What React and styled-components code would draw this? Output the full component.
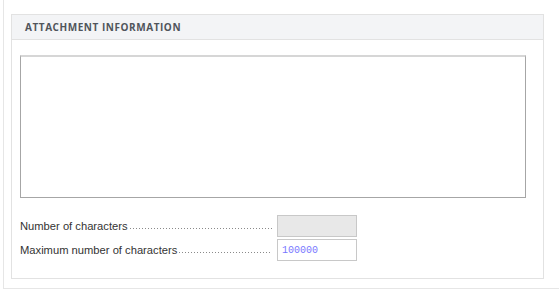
import styled, { createGlobalStyle } from "styled-components";

const GlobalStyle = createGlobalStyle`
  body {
    margin: 0;
    background: #fff;
    font-family: "Liberation Sans", Arial, sans-serif;
  }
`;

const Frame = styled.div`
  margin-left: 3px;
  border-left: 1px solid #e6e6e6;
  border-bottom: 1px solid #e6e6e6;
  padding: 14px 15px 9px 7px;
`;

const Panel = styled.div`
  border: 1px solid #e2e2e2;
  background: #fff;
`;

const PanelHeader = styled.div`
  height: 24px;
  display: flex;
  align-items: center;
  padding-left: 13px;
  background: #f3f4f6;
  border-bottom: 1px solid #e2e2e2;
`;

const PanelTitle = styled.h4`
  margin: 0;
  font-family: "Open Sans", sans-serif;
  font-size: 10px;
  font-weight: 700;
  letter-spacing: 0.55px;
  color: #50555b;
  text-transform: uppercase;
`;

const PanelBody = styled.div`
  padding: 15px 17px 15px 8px;
  display: flex;
  flex-direction: column;
`;

const TextArea = styled.textarea`
  box-sizing: border-box;
  width: 506px;
  height: 143px;
  margin: 0 0 17px;
  padding: 4px;
  resize: none;
  border: 1px solid #a6a6a6;
  border-top: 2px solid #d6d6d6;
  outline: none;
  font-family: "Liberation Sans", Arial, sans-serif;
`;

const FieldRow = styled.div`
  display: flex;
  align-items: center;
  margin-bottom: 2px;
`;

const Label = styled.div`
  width: 252px;
  margin-right: 5px;
  display: flex;
  align-items: baseline;
  white-space: nowrap;
  font-size: 11.2px;
  color: #333;
`;

const Dots = styled.span`
  flex: 1;
  height: 8px;
  margin-left: 1px;
  background-image: radial-gradient(circle, #8a8a8a 0.55px, transparent 0.9px);
  background-size: 3px 3px;
  background-repeat: repeat-x;
  background-position: left bottom;
`;

const Field = styled.input`
  box-sizing: border-box;
  width: 80px;
  height: 22px;
  padding: 0 4px;
  border: 1px solid #c8c8c8;
  background: ${(p) => (p.readOnly ? "#e8e8e8" : "#fff")};
  color: #7878ff;
  font-family: "Liberation Mono", "Courier New", monospace;
  font-size: 10px;
  outline: none;
`;

export default function App() {
  return (
    <>
      <GlobalStyle />
      <Frame>
        <Panel>
          <PanelHeader>
            <PanelTitle>Attachment Information</PanelTitle>
          </PanelHeader>
          <PanelBody>
            <TextArea />
            <FieldRow>
              <Label>
                Number of characters<Dots />
              </Label>
              <Field readOnly defaultValue="" />
            </FieldRow>
            <FieldRow>
              <Label>
                Maximum number of characters<Dots />
              </Label>
              <Field defaultValue="100000" />
            </FieldRow>
          </PanelBody>
        </Panel>
      </Frame>
    </>
  );
}
